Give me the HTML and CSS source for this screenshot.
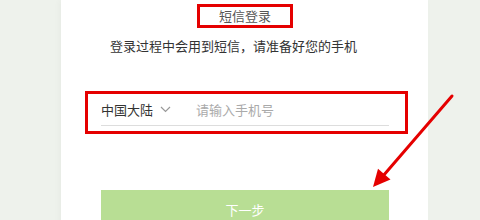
FILE: index.html
```html
<!DOCTYPE html>
<html>
<head>
    <meta charset="UTF-8">
    <meta name="viewport" content="width=device-width, initial-scale=1.0">
    <title>短信登录</title>
    <link rel="stylesheet" href="styles.css">
</head>
<body>
    <div class="card">
        <div class="title">短信登录</div>
        <p class="tip">登录过程中会用到短信，请准备好您的手机</p>
        <div class="mark">
            <div class="phone-row">
                <span class="region">中国大陆
                    <svg class="chevron" width="11" height="7" viewBox="0 0 11 7">
                        <polyline points="1,1 5.5,5.5 10,1" fill="none" stroke="#999" stroke-width="1.2"/>
                    </svg>
                </span>
                <input type="text" class="phone" placeholder="请输入手机号">
            </div>
        </div>
        <button class="next">下一步</button>
    </div>
    <svg class="arrow" width="480" height="220" viewBox="0 0 480 220">
        <line x1="452" y1="96" x2="383" y2="176" stroke="#e50000" stroke-width="3" stroke-linecap="round"/>
        <polygon points="373,187 390.5,179.6 378,168.8" fill="#e50000"/>
    </svg>
</body>
</html>
```

FILE: styles.css
```css
body {
    margin: 0;
    height: 220px;
    overflow: hidden;
    background-color: #eef2ec;
    font-family: "Noto Sans CJK SC", "Noto Sans", sans-serif;
}
.card {
    margin-left: 61px;
    width: 367px;
    min-height: 220px;
    box-sizing: border-box;
    padding: 4px 39px 0 40px;
    background-color: #fff;
    box-shadow: -2px 0 6px rgba(0, 0, 0, 0.03);
}
.title {
    width: 96px;
    height: 24px;
    box-sizing: border-box;
    margin: 0 auto;
    border: 3px solid #e50000;
    line-height: 18px;
    text-align: center;
    font-size: 13px;
    color: #555;
}
.tip {
    margin: 8px 0 0;
    padding-left: 9px;
    line-height: 20px;
    font-size: 13px;
    color: #333;
}
.mark {
    margin: 35px -19px 0 -16px;
    padding: 0 16px 5px 13px;
    border: 3px solid #e50000;
}
.phone-row {
    display: flex;
    align-items: center;
    height: 31px;
    border-bottom: 1px solid #ddd;
}
.region {
    display: flex;
    align-items: center;
    width: 95px;
    font-size: 13px;
    color: #333;
}
.chevron {
    margin-left: 7px;
}
.phone {
    flex: 1;
    border: none;
    outline: none;
    padding: 0;
    font-family: inherit;
    font-size: 13px;
    color: #333;
    background: transparent;
}
.phone::placeholder {
    color: #aaa;
}
.next {
    display: block;
    width: 100%;
    height: 40px;
    margin-top: 56px;
    border: none;
    background-color: #b8de94;
    color: #fff;
    font-family: inherit;
    font-size: 13px;
    line-height: 36px;
    cursor: pointer;
}
.arrow {
    position: absolute;
    left: 0;
    top: 0;
    pointer-events: none;
}
```
